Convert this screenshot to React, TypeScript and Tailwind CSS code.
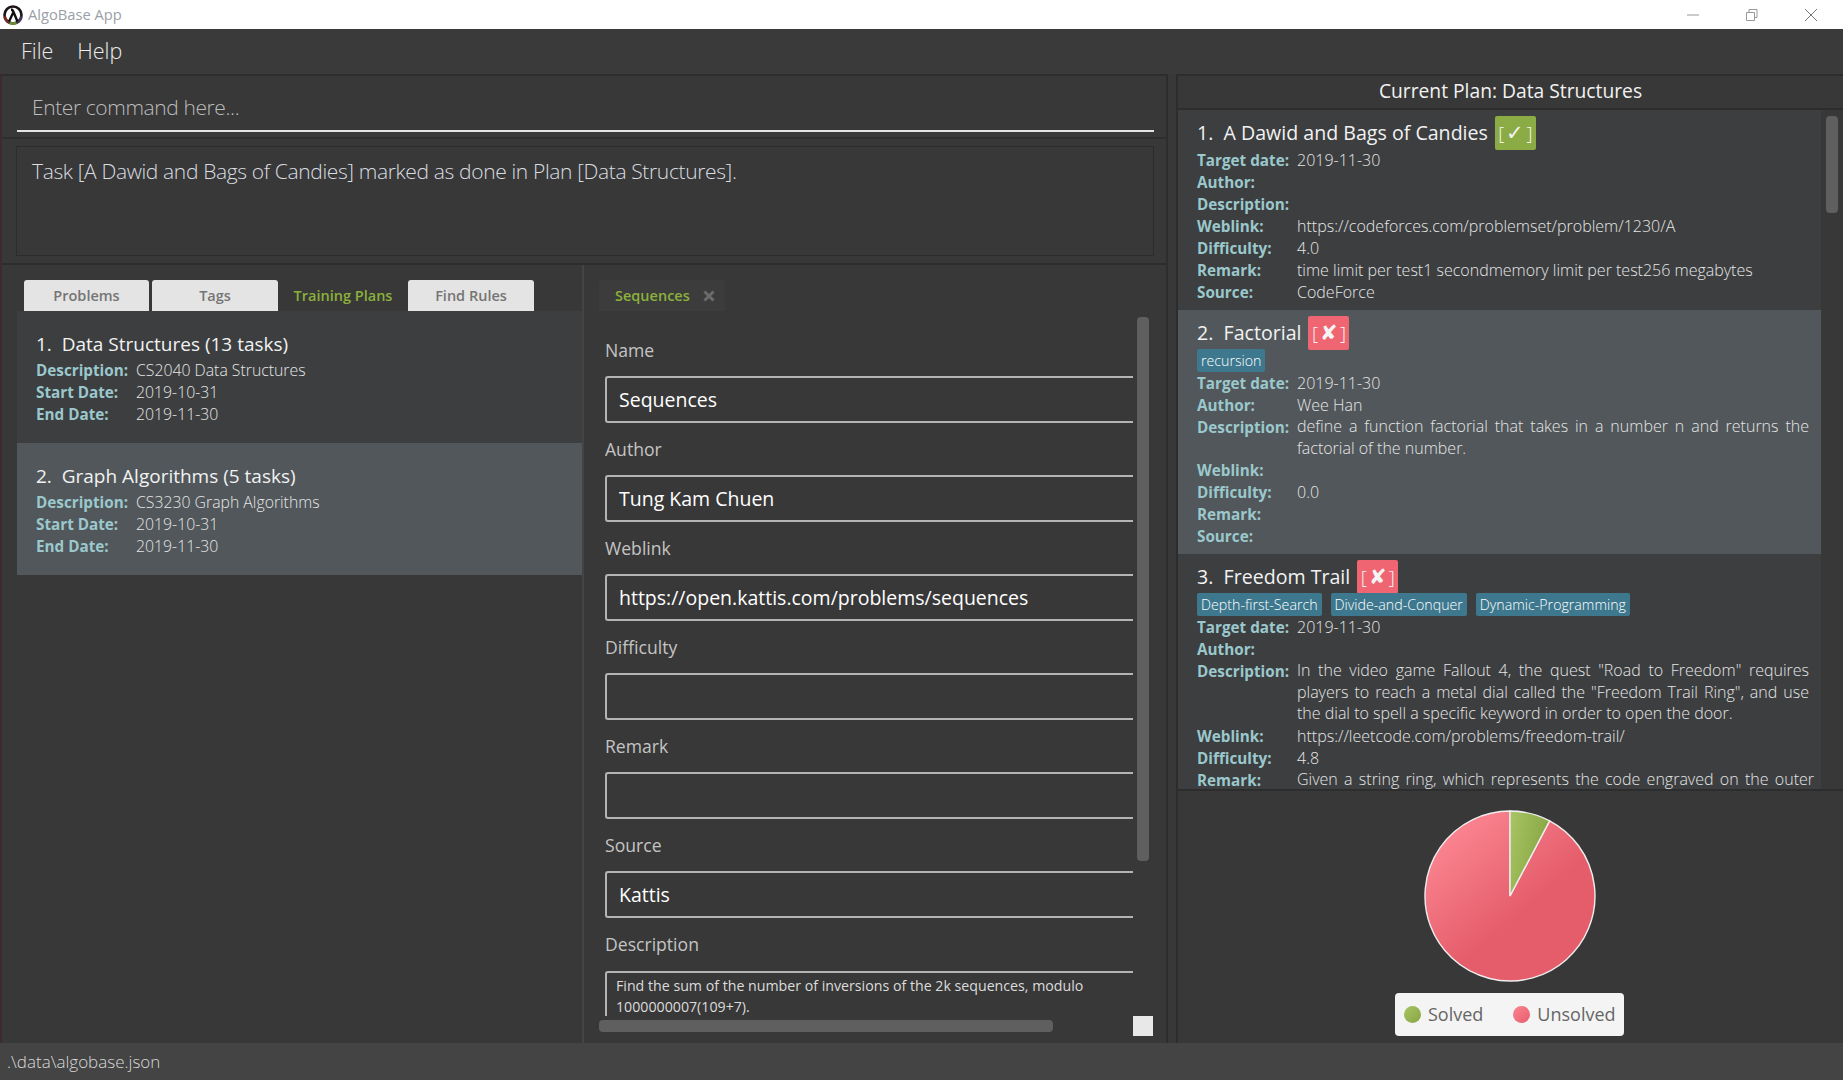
const font = "font-['Open_Sans','Noto_Sans',sans-serif]";

const Row = ({label, value, lines}: {label: string; value?: string; lines?: string[]}) => (
    <div className="flex">
        <div className="w-[100px] shrink-0 text-[15.25px] font-bold leading-[22px] text-[#9bc8cc]">{label}</div>
        {lines
            ? <div className="flex-1">
                {lines.map((l, i) => (
                    <div key={i} className={`text-[16px] font-light leading-[21.5px] text-[#e6e6e6] ${i < lines.length - 1 ? "text-justify [text-align-last:justify]" : ""}`}>{l}</div>
                ))}
            </div>
            : <div className="flex-1 whitespace-nowrap text-[16px] font-light leading-[22px] text-[#e6e6e6]">{value}</div>}
    </div>
);

const Status = ({done}: {done?: boolean}) => (
    <span className={`ml-[7px] flex h-[34px] w-[41px] items-center justify-center rounded-[2px] text-[19px] font-light text-[#f4f4f4] ${done ? "bg-[#8bab45]" : "bg-[#ef6572]"}`}>
        [<span className="mx-[2px] text-[21px] font-normal">{done ? "✓" : "✘"}</span>]
    </span>
);

const Tag = ({text}: {text: string}) => (
    <span className="flex h-[23px] items-center rounded-[2px] bg-[#3e788e] px-[4px] text-[14.2px] font-light text-white">{text}</span>
);

const TaskTitle = ({text, done}: {text: string; done?: boolean}) => (
    <div className="-mb-[1px] flex h-[34px] items-center whitespace-pre text-[19.6px] text-[#f2f2f2]">{text}<Status done={done}/></div>
);

const PlanCard = ({title, desc, selected}: {title: string; desc: string; selected?: boolean}) => (
    <div className={`h-[132px] pl-[19px] pt-[18px] ${selected ? "bg-[#51575a]" : "bg-[#3c3e40]"}`}>
        <div className="whitespace-pre text-[19px] leading-[30px] text-[#f2f2f2]">{title}</div>
        {[["Description:", desc], ["Start Date:", "2019-10-31"], ["End Date:", "2019-11-30"]].map(([k, v]) => (
            <div key={k} className="flex">
                <div className="w-[100px] text-[15.25px] font-bold leading-[22px] text-[#9bc8cc]">{k}</div>
                <div className="text-[15.8px] font-light leading-[22px] text-[#e6e6e6]">{v}</div>
            </div>
        ))}
    </div>
);

const Field = ({label, value}: {label: string; value?: string}) => (
    <div>
        <div className="flex h-[52px] items-center text-[17.6px] text-[#c4c4c4]">{label}</div>
        <div className="flex h-[47px] items-center rounded-l-[3px] border-y-2 border-l-2 border-[#b4b4b4] pl-[12px] text-[19.5px] font-medium text-white">{value}</div>
    </div>
);

const App = () => {
    return (
        <div className={`flex h-[1080px] w-[1843px] flex-col overflow-hidden bg-[#383838] ${font}`}>
            {/* title bar */}
            <div className="flex h-[29px] shrink-0 items-center bg-white">
                <svg className="ml-[3px]" width="20" height="20" viewBox="0 0 20 20">
                    <circle cx="10" cy="10" r="8.5" fill="#fff" stroke="#1c1416" strokeWidth="2.6"/>
                    <path d="M1.6 11.5 A8.5 8.5 0 0 0 6 17.5" fill="none" stroke="#7a2a20" strokeWidth="2.6"/>
                    <path d="M6.5 17.8 A8.5 8.5 0 0 0 13.5 17.8" fill="none" stroke="#6b8a3a" strokeWidth="2.6"/>
                    <path d="M14 17.5 A8.5 8.5 0 0 0 18.4 11.5" fill="none" stroke="#4a3560" strokeWidth="2.6"/>
                    <path d="M6 16.5 L10.5 7 Q9.5 4.5 8 4.5 M10.5 7 L14.5 16.5" fill="none" stroke="#111" strokeWidth="2.4"/>
                </svg>
                <span className="ml-[5px] text-[14.7px] text-[#9aa0a6]">AlgoBase App</span>
                <div className="ml-auto flex items-center">
                    <svg width="14" height="14" viewBox="0 0 14 14" className="mr-[45px]"><path d="M1 7h12" stroke="#999" strokeWidth="1"/></svg>
                    <svg width="14" height="14" viewBox="0 0 14 14" className="mr-[45px]"><path d="M1.5 4.5h8v8h-8zM4 4.5v-3h8v8h-2.5" fill="none" stroke="#999" strokeWidth="1"/></svg>
                    <svg width="14" height="14" viewBox="0 0 14 14" className="mr-[25px]"><path d="M1 1l12 12M13 1L1 13" stroke="#777" strokeWidth="1"/></svg>
                </div>
            </div>

            {/* menu */}
            <div className="flex h-[45px] shrink-0 items-center gap-[24px] bg-[#3a3a3a] pl-[21px] text-[21.5px] font-light text-[#ececec]">
                <span>File</span>
                <span>Help</span>
            </div>

            <div className="flex h-[969px] shrink-0">
                {/* left side */}
                <div className="flex w-[1168px] shrink-0 flex-col border-r-2 border-l-2 border-r-[#2d2d2d] border-l-[#3b2a32]">
                    <div className="h-[65px] shrink-0 border-y-2 border-[#2d2d2d] pl-[15px] pr-[12px]">
                        <div className="flex h-[56px] items-center border-b-2 border-[#e2e2e2] pl-[15px] pt-[9px] text-[21px] font-light tracking-[-0.4px] text-[#bcbcbc]">Enter command here...</div>
                    </div>
                    <div className="h-[126px] shrink-0 border-b-2 border-[#2d2d2d] pl-[14px] pr-[12px] pt-[7px]">
                        <div className="h-[110px] border border-[#2c2c2c] pl-[15px] pt-[9px] text-[21px] font-light tracking-[-0.36px] text-[#d8dde0]">
                            Task [A Dawid and Bags of Candies] marked as done in Plan [Data Structures].
                        </div>
                    </div>
                    <div className="flex min-h-0 flex-1">
                        {/* plans list */}
                        <div className="flex w-[582px] shrink-0 flex-col border-r-2 border-[#444] pl-[15px] pt-[15px]">
                            <div className="flex h-[31px] shrink-0 pl-[7px] text-[14.5px] font-semibold">
                                <div className="flex w-[125px] items-center justify-center rounded-t-[3px] bg-[#e4e4e4] text-[#757575]">Problems</div>
                                <div className="ml-[3px] flex w-[126px] items-center justify-center rounded-t-[3px] bg-[#e4e4e4] text-[#757575]">Tags</div>
                                <div className="flex w-[130px] items-center justify-center text-[#8bb13c]">Training Plans</div>
                                <div className="flex w-[126px] items-center justify-center rounded-t-[3px] bg-[#e4e4e4] text-[#757575]">Find Rules</div>
                            </div>
                            <PlanCard title="1.  Data Structures (13 tasks)" desc="CS2040 Data Structures"/>
                            <PlanCard title="2.  Graph Algorithms (5 tasks)" desc="CS3230 Graph Algorithms" selected/>
                        </div>

                        {/* plan form */}
                        <div className="flex min-w-0 flex-1 flex-col pl-[15px] pt-[15px]">
                            <div className="flex h-[31px] w-[126px] shrink-0 items-center rounded-t-[3px] bg-[#3c3c3c] pl-[16px] text-[14.5px] font-semibold text-[#8bb13c]">
                                Sequences
                                <svg className="ml-[13px]" width="12" height="12" viewBox="0 0 12 12"><path d="M1.5 1.5l9 9M10.5 1.5l-9 9" stroke="#6b6b6b" strokeWidth="3"/></svg>
                            </div>
                            <div className="flex h-[705px] shrink-0">
                                <div className="ml-[6px] w-[528px] shrink-0 overflow-hidden pt-[13px]">
                                    <Field label="Name" value="Sequences"/>
                                    <Field label="Author" value="Tung Kam Chuen"/>
                                    <Field label="Weblink" value="https://open.kattis.com/problems/sequences"/>
                                    <Field label="Difficulty"/>
                                    <Field label="Remark"/>
                                    <Field label="Source" value="Kattis"/>
                                    <div className="flex h-[53px] items-center text-[17.6px] text-[#c4c4c4]">Description</div>
                                    <div className="rounded-tl-[3px] border-t-2 border-l-2 border-[#b4b4b4] pl-[9px] pt-[2px] text-[14.2px] leading-[21px] text-[#dcdcdc]">
                                        Find the sum of the number of inversions of the 2k sequences, modulo<br/>1000000007(109+7).
                                    </div>
                                </div>
                                <div className="ml-[4px] w-[12px] shrink-0 pt-[6px]">
                                    <div className="h-[544px] rounded-[4px] bg-[#5f5f5f]"/>
                                </div>
                            </div>
                            <div className="flex h-[20px] shrink-0">
                                <div className="mt-[4px] h-[12px] w-[454px] rounded-[4px] bg-[#5f5f5f]"/>
                                <div className="ml-[80px] h-[20px] w-[20px] bg-[#e8e8e8]"/>
                            </div>
                        </div>
                    </div>
                </div>

                {/* current plan */}
                <div className="ml-[8px] flex min-w-0 flex-1 flex-col">
                    <div className="flex h-[36px] shrink-0 items-center justify-center border-y-2 border-l-2 border-[#2d2d2d] pb-[2px] text-[19.25px] text-[#f2f2f2]">
                        Current Plan: Data Structures
                    </div>
                    <div className="flex h-[679px] shrink-0 border-l-2 border-[#2d2d2d]">
                        <div className="w-[643px] shrink-0 overflow-hidden">
                            <div className="h-[200px] bg-[#3c3e40] px-[19px] pt-[6px]">
                                <TaskTitle text="1.  A Dawid and Bags of Candies" done/>
                                <Row label="Target date:" value="2019-11-30"/>
                                <Row label="Author:"/>
                                <Row label="Description:"/>
                                <Row label="Weblink:" value="https://codeforces.com/problemset/problem/1230/A"/>
                                <Row label="Difficulty:" value="4.0"/>
                                <Row label="Remark:" value="time limit per test1 secondmemory limit per test256 megabytes"/>
                                <Row label="Source:" value="CodeForce"/>
                            </div>
                            <div className="h-[244px] bg-[#51575a] pl-[19px] pr-[12px] pt-[6px]">
                                <TaskTitle text="2.  Factorial"/>
                                <div className="flex"><Tag text="recursion"/></div>
                                <Row label="Target date:" value="2019-11-30"/>
                                <Row label="Author:" value="Wee Han"/>
                                <Row label="Description:" lines={["define a function factorial that takes in a number n and returns the", "factorial of the number."]}/>
                                <Row label="Weblink:"/>
                                <Row label="Difficulty:" value="0.0"/>
                                <Row label="Remark:"/>
                                <Row label="Source:"/>
                            </div>
                            <div className="h-[235px] bg-[#3c3e40] pl-[19px] pr-[12px] pt-[6px]">
                                <TaskTitle text="3.  Freedom Trail"/>
                                <div className="flex gap-[9px]">
                                    <Tag text="Depth-first-Search"/>
                                    <Tag text="Divide-and-Conquer"/>
                                    <Tag text="Dynamic-Programming"/>
                                </div>
                                <Row label="Target date:" value="2019-11-30"/>
                                <Row label="Author:"/>
                                <Row label="Description:" lines={["In the video game Fallout 4, the quest \"Road to Freedom\" requires", "players to reach a metal dial called the \"Freedom Trail Ring\", and use", "the dial to spell a specific keyword in order to open the door."]}/>
                                <Row label="Weblink:" value="https://leetcode.com/problems/freedom-trail/"/>
                                <Row label="Difficulty:" value="4.8"/>
                                <div className="-mr-[5px]">
                                    <Row label="Remark:" lines={["Given a string ring, which represents the code engraved on the outer", ""]}/>
                                </div>
                            </div>
                        </div>
                        <div className="flex-1 bg-[#383838] px-[5px] pt-[6px]">
                            <div className="h-[97px] rounded-[4px] bg-[#5f5f5f]"/>
                        </div>
                    </div>
                    <div className="flex min-h-0 flex-1 flex-col items-center border-t-2 border-l-2 border-[#2d2d2d] pt-[19px] pr-[2px]">
                        <svg width="172" height="172" viewBox="0 0 172 172">
                            <defs>
                                <linearGradient id="pieRed" x1="0.15" y1="0.1" x2="0.75" y2="0.8">
                                    <stop offset="0" stopColor="#fb8591"/>
                                    <stop offset="0.7" stopColor="#e55d6b"/>
                                </linearGradient>
                                <linearGradient id="pieGreen" x1="0" y1="0" x2="1" y2="0.4">
                                    <stop offset="0" stopColor="#a9c566"/>
                                    <stop offset="1" stopColor="#86a540"/>
                                </linearGradient>
                            </defs>
                            <path d="M86 86 L86 1 A85 85 0 1 0 125.6 10.8 Z" fill="url(#pieRed)" stroke="#eee" strokeWidth="1.4"/>
                            <path d="M86 86 L86 1 A85 85 0 0 1 125.6 10.8 Z" fill="url(#pieGreen)" stroke="#eee" strokeWidth="1.4"/>
                        </svg>
                        <div className="mt-[11px] flex h-[43px] w-[229px] items-center rounded-[4px] bg-[#f4f4f4] pl-[9px] text-[18px] text-[#666]">
                            <span className="h-[17px] w-[17px] rounded-full bg-gradient-to-br from-[#a9c566] to-[#86a540]"/>
                            <span className="ml-[7px]">Solved</span>
                            <span className="ml-[30px] h-[17px] w-[17px] rounded-full bg-gradient-to-br from-[#fb8591] to-[#e55d6b]"/>
                            <span className="ml-[7px]">Unsolved</span>
                        </div>
                    </div>
                </div>
            </div>

            {/* status */}
            <div className="flex h-[37px] shrink-0 items-center bg-[#444444] pl-[7px] text-[17px] font-light text-[#d8d8d8]">.\data\algobase.json</div>
        </div>
    );
};

export default App;
